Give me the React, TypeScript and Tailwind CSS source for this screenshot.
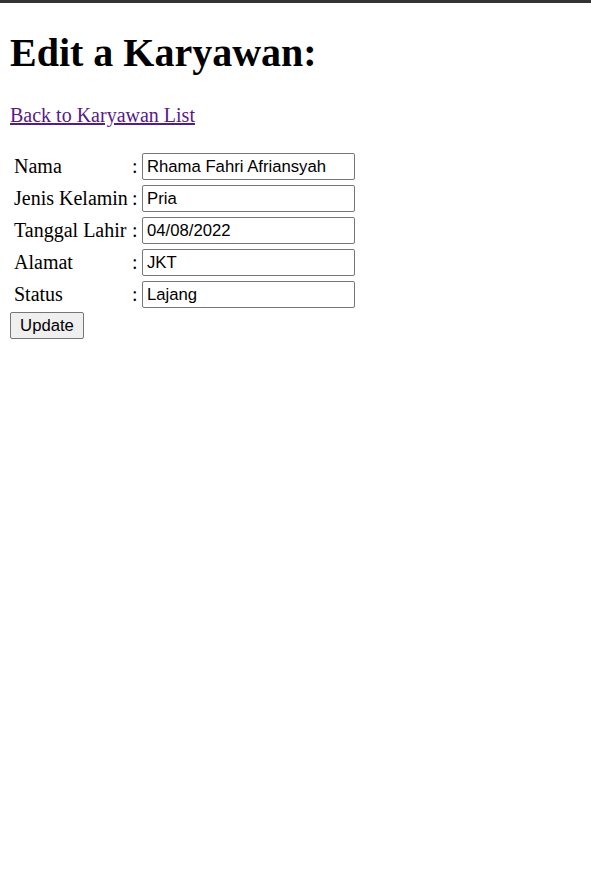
const fields = [
  { label: "Nama", value: "Rhama Fahri Afriansyah" },
  { label: "Jenis Kelamin", value: "Pria" },
  { label: "Tanggal Lahir", value: "04/08/2022" },
  { label: "Alamat", value: "JKT" },
  { label: "Status", value: "Lajang" },
];

export default function App() {
  return (
    <div className="min-h-screen bg-white font-['Liberation_Serif',serif] text-[20px] text-black">
      <div className="h-[3px] bg-[#333333]" />
      <main className="px-[10px]">
        <h1 className="mt-[27px] text-[40px] font-bold leading-[46px]">Edit a Karyawan:</h1>
        <a href="#" className="mt-[28px] block w-fit text-[20px] leading-[23px] text-[#551a8b] underline">
          Back to Karyawan List
        </a>

        <form className="mt-[26px] flex flex-col gap-[5px]" onSubmit={(e) => e.preventDefault()}>
          {fields.map((f) => (
            <div key={f.label} className="flex h-[27px] items-center">
              <span className="w-[120px] pl-[4px] leading-[23px]">{f.label}</span>
              <span className="w-[12px] pl-[2px] leading-[23px]">:</span>
              <input
                type="text"
                defaultValue={f.value}
                className="h-[27px] w-[213px] rounded-[2px] border border-[#767676] bg-white px-[4px] font-['Liberation_Sans',Arial,sans-serif] text-[16.7px] text-black outline-none"
              />
            </div>
          ))}
          <div className="mt-[-1px] flex">
            <button
              type="submit"
              className="h-[27px] w-[74px] rounded-[2px] border border-[#767676] bg-[#efefef] font-['Liberation_Sans',Arial,sans-serif] text-[16.7px] text-black"
            >
              Update
            </button>
          </div>
        </form>
      </main>
    </div>
  );
}
